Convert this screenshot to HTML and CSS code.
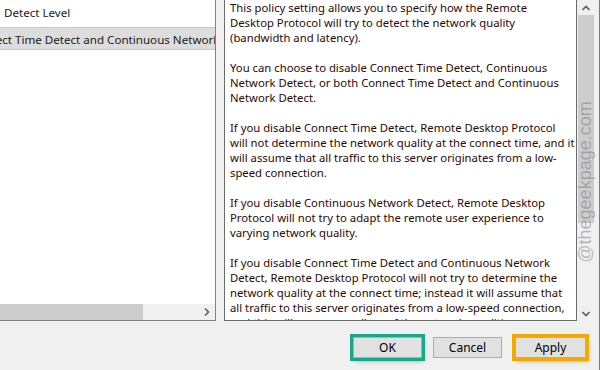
FILE: index.html
```html
<!DOCTYPE html>
<html lang="en">
<head>
    <meta charset="UTF-8">
    <title>Select Network Detect Level</title>
    <link rel="stylesheet" href="styles.css">
</head>
<body>
    <div class="dialog">
        <div class="panes">
            <div class="list-pane">
                <div class="list">
                    <div class="item">Detect Level</div>
                    <div class="item selected"><span class="scrolled">Connect Time Detect and Continuous Network Detect</span></div>
                </div>
                <div class="hscroll">
                    <div class="hthumb"></div>
                    <svg class="arrow-right" width="6" height="8" viewBox="0 0 6 8"><polyline points="1,0.5 4.5,4 1,7.5" fill="none" stroke="#606060" stroke-width="1.6"/></svg>
                </div>
            </div>
            <div class="help-pane">
                <div class="help-text">
                    This policy setting allows you to specify how the Remote<br>
                    Desktop Protocol will try to detect the network quality<br>
                    (bandwidth and latency).<br>
                    <br>
                    You can choose to disable Connect Time Detect, Continuous<br>
                    Network Detect, or both Connect Time Detect and Continuous<br>
                    Network Detect.<br>
                    <br>
                    If you disable Connect Time Detect, Remote Desktop Protocol<br>
                    will not determine the network quality at the connect time, and it<br>
                    will assume that all traffic to this server originates from a low-<br>
                    speed connection.<br>
                    <br>
                    If you disable Continuous Network Detect, Remote Desktop<br>
                    Protocol will not try to adapt the remote user experience to<br>
                    varying network quality.<br>
                    <br>
                    If you disable Connect Time Detect and Continuous Network<br>
                    Detect, Remote Desktop Protocol will not try to determine the<br>
                    network quality at the connect time; instead it will assume that<br>
                    all traffic to this server originates from a low-speed connection,<br>
                    and this will occur regardless of the network conditions.
                </div>
            </div>
            <div class="vscroll">
                <div class="varrow">
                    <svg width="8" height="6" viewBox="0 0 8 6"><polyline points="0.5,5 4,1.5 7.5,5" fill="none" stroke="#606060" stroke-width="1.6"/></svg>
                </div>
                <div class="vthumb"></div>
                <div class="vspace"></div>
                <div class="varrow">
                    <svg width="8" height="6" viewBox="0 0 8 6"><polyline points="0.5,1 4,4.5 7.5,1" fill="none" stroke="#606060" stroke-width="1.6"/></svg>
                </div>
            </div>
        </div>
        <div class="buttons">
            <button class="btn btn-ok">OK</button>
            <button class="btn btn-cancel">Cancel</button>
            <button class="btn btn-apply">Apply</button>
        </div>
        <div class="watermark">@thegeekpage.com</div>
    </div>
</body>
</html>
```

FILE: styles.css
```css
body {
    margin: 0;
    background: #f0f0f0;
    font-family: "Noto Sans", "Open Sans", sans-serif;
    overflow: hidden;
}
.dialog {
    position: relative;
    width: 600px;
    height: 370px;
    box-sizing: border-box;
    border-right: 1px solid #7a7a7a;
}
.panes {
    display: flex;
    height: 321px;
}
.list-pane {
    width: 216px;
    box-sizing: border-box;
    display: flex;
    flex-direction: column;
    background: #fff;
    border-right: 1px solid #828282;
    border-bottom: 1px solid #828282;
}
.list {
    flex: 1;
    overflow: hidden;
    font-size: 11.6px;
    color: #1a1a1a;
    white-space: nowrap;
}
.item {
    line-height: 16px;
    padding: 5px 4px 0;
}
.item.selected {
    margin-top: 6px;
    padding: 2px 0 0;
    height: 19px;
    line-height: 19px;
    background: #dddddd;
    border-top: 1px solid #c6c6c6;
    border-bottom: 1px solid #c6c6c6;
}
.scrolled {
    margin-left: -33px;
}
.hscroll {
    height: 16px;
    display: flex;
    align-items: center;
    background: #f0f0f0;
}
.hthumb {
    width: 143px;
    height: 16px;
    background: #cdcdcd;
}
.arrow-right {
    margin-left: 61px;
}
.help-pane {
    width: 353px;
    margin-left: 8px;
    box-sizing: border-box;
    background: #fff;
    border: 1px solid #6b6b6b;
    border-top: none;
    overflow: hidden;
}
.help-text {
    padding: 0 0 0 5px;
    font-size: 11.3px;
    line-height: 15px;
    color: #2b0808;
    white-space: nowrap;
}
.vscroll {
    width: 22px;
    display: flex;
    flex-direction: column;
    background: #f0f0f0;
}
.varrow {
    width: 16px;
    height: 15px;
    margin-left: 1px;
    display: flex;
    align-items: center;
    justify-content: center;
}
.vthumb {
    width: 16px;
    height: 208px;
    margin-left: 1px;
    background: #cdcdcd;
}
.vspace {
    flex: 1;
}
.buttons {
    display: flex;
    justify-content: flex-end;
    padding: 16px 13px 0 0;
}
.btn {
    width: 69px;
    height: 21px;
    padding: 0;
    margin-left: 10px;
    font-family: "Noto Sans", "Open Sans", sans-serif;
    font-size: 12px;
    color: #000;
    background: #e1e1e1;
    border: 1px solid #adadad;
}
.btn-ok {
    outline: 3px solid #17a88a;
    box-shadow: 2px 3px 4px rgba(0, 0, 0, 0.35);
}
.btn-cancel {
    margin-left: 11px;
}
.btn-apply {
    width: 71px;
    margin-left: 13px;
    outline: 3px solid #f5a800;
    box-shadow: 2px 3px 4px rgba(0, 0, 0, 0.35);
}
.watermark {
    position: absolute;
    left: 585px;
    top: 182px;
    transform: translate(-50%, -50%) rotate(-90deg);
    font-family: "Liberation Sans", Arial, sans-serif;
    font-size: 18px;
    color: rgba(110, 110, 110, 0.45);
    white-space: nowrap;
}
```
